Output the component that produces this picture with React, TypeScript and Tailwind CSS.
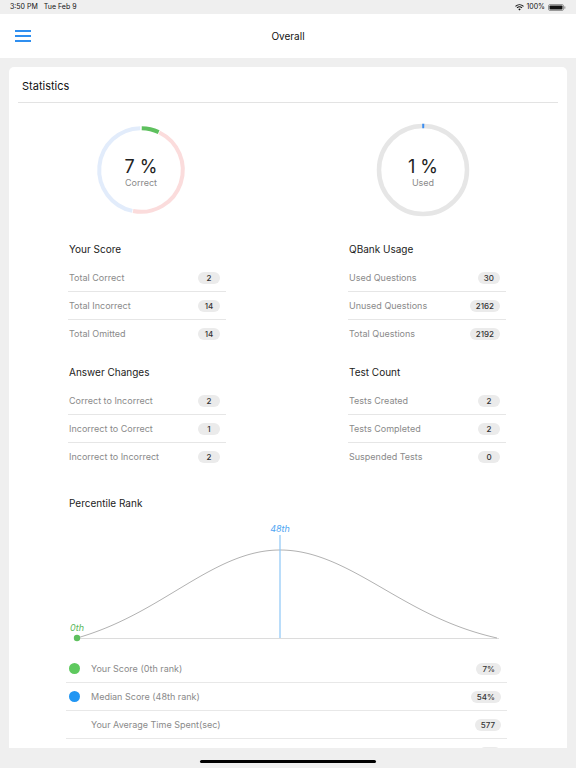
import React from "react";

const font = { fontFamily: "Inter, 'Liberation Sans', sans-serif" };

function arc(cx: number, cy: number, r: number, a0: number, a1: number) {
  const p = (a: number) => {
    const t = ((a - 90) * Math.PI) / 180;
    return `${(cx + r * Math.cos(t)).toFixed(2)} ${(cy + r * Math.sin(t)).toFixed(2)}`;
  };
  const large = a1 - a0 > 180 ? 1 : 0;
  return `M ${p(a0)} A ${r} ${r} 0 ${large} 1 ${p(a1)}`;
}

// bell curve in card coordinates (page x - 9, page y - 512)
function bellPath() {
  const x0 = 68, peak = 271, x1 = 488, base = 125, h = 88, s = 104;
  const pts: string[] = [];
  for (let x = x0; x <= x1; x += 3) {
    const d = x - peak;
    const edge = d < 0 ? peak - x0 : x1 - peak;
    const gEnd = Math.exp(-(edge * edge) / (2 * s * s));
    const g = Math.exp(-(d * d) / (2 * s * s));
    const y = base - (h * Math.max(0, g - gEnd)) / (1 - gEnd);
    pts.push(`${x.toFixed(1)},${y.toFixed(2)}`);
  }
  return "M" + pts.join(" L");
}

const Badge = ({ v }: { v: string }) => (
  <span className="inline-flex h-[12px] min-w-[22px] items-center justify-center rounded-full bg-[#ebebeb] px-[6px] text-[8px] font-medium text-[#333]">
    {v}
  </span>
);

function StatList({ title, rows }: { title: string; rows: [string, string][] }) {
  return (
    <div className="w-[158px]">
      <div className="h-[16px] text-[10px] leading-[16px] text-[#222] pl-[1px]">{title}</div>
      <div className="mt-[7px]">
        {rows.map(([k, v], i) => (
          <div
            key={k}
            className={`flex h-[28px] items-center justify-between pl-[1px] pr-[6px] ${i < rows.length - 1 ? "border-b border-[#e6e6e6]" : ""}`}
          >
            <span className="text-[9px] text-[#8a8a8a]">{k}</span>
            <Badge v={v} />
          </div>
        ))}
      </div>
    </div>
  );
}

export default function App() {
  return (
    <div className="flex h-[768px] w-[576px] flex-col overflow-hidden bg-[#efefef]" style={font}>
      {/* status bar */}
      <div className="flex h-[14px] items-center justify-between px-[10px] text-[7px] text-[#111]">
        <div className="flex gap-[6px]">
          <span>3:50 PM</span>
          <span>Tue Feb 9</span>
        </div>
        <div className="flex items-center gap-[2px]">
          <svg width="9" height="7" viewBox="0 0 9 7">
            <path d="M0.5 2.3 A6 6 0 0 1 8.5 2.3" stroke="#111" strokeWidth="1.1" fill="none" />
            <path d="M2 3.8 A3.8 3.8 0 0 1 7 3.8" stroke="#111" strokeWidth="1.1" fill="none" />
            <path d="M4.5 6.6 L3.3 5.2 A1.7 1.7 0 0 1 5.7 5.2 Z" fill="#111" />
          </svg>
          <span>100%</span>
          <svg width="18" height="7" viewBox="0 0 18 7" className="ml-[1px]">
            <rect x="0.5" y="0.5" width="15" height="6" rx="1.5" stroke="#999" fill="none" />
            <rect x="1.5" y="1.5" width="13" height="4" rx="0.8" fill="#111" />
            <rect x="16.2" y="2.3" width="1.2" height="2.4" rx="0.5" fill="#999" />
          </svg>
        </div>
      </div>

      {/* nav bar */}
      <div className="relative flex h-[44px] shrink-0 items-center justify-center bg-white">
        <svg className="absolute left-[15px] top-[15px]" width="16" height="14" viewBox="0 0 16 14">
          <path d="M0 2 H16 M0 7 H16 M0 12 H16" stroke="#2f8ff0" strokeWidth="2" />
        </svg>
        <span className="text-[10px] text-[#111]">Overall</span>
      </div>

      {/* scroll area */}
      <div className="h-[690px] shrink-0 overflow-hidden px-[9px] pt-[9px]">
        <div className="h-[720px] rounded-[5px] bg-white">
          <div className="mx-[9px] flex h-[36px] items-center border-b border-[#e3e3e3] pl-[4px] pt-[3px] text-[11px] text-[#111]">
            Statistics
          </div>

          {/* donuts */}
          <div className="relative mt-[17px] h-[100px]">
            <svg className="absolute left-[82px] top-0" width="100" height="100" viewBox="0 0 100 100">
              <path d={arc(50, 50, 41.8, 1, 25)} stroke="#5ec05e" strokeWidth="4" fill="none" />
              <path d={arc(50, 50, 41.8, 26, 191)} stroke="#fbdcdc" strokeWidth="4" fill="none" />
              <path d={arc(50, 50, 41.8, 192, 359)} stroke="#e2ecfb" strokeWidth="4" fill="none" />
            </svg>
            <div className="absolute left-[82px] top-[2px] flex h-[100px] w-[100px] flex-col items-center justify-center">
              <span className="text-[18px] leading-[20px] text-[#222]">7 %</span>
              <span className="text-[9px] leading-[11px] text-[#8a8a8a]">Correct</span>
            </div>
            <svg className="absolute left-[364px] top-0" width="100" height="100" viewBox="0 0 100 100">
              <circle cx="50" cy="50" r="44" stroke="#e6e6e6" strokeWidth="4.5" fill="none" />
              <path d={arc(50, 50, 44, -1, 1.6)} stroke="#3d8ef0" strokeWidth="4.5" fill="none" />
            </svg>
            <div className="absolute left-[364px] top-[2px] flex h-[100px] w-[100px] flex-col items-center justify-center">
              <span className="text-[18px] leading-[20px] text-[#222]">1 %</span>
              <span className="text-[9px] leading-[11px] text-[#8a8a8a]">Used</span>
            </div>
          </div>

          {/* lists */}
          <div className="mt-[21px] flex pl-[59px]">
            <StatList
              title="Your Score"
              rows={[
                ["Total Correct", "2"],
                ["Total Incorrect", "14"],
                ["Total Omitted", "14"],
              ]}
            />
            <div className="ml-[122px]">
              <StatList
                title="QBank Usage"
                rows={[
                  ["Used Questions", "30"],
                  ["Unused Questions", "2162"],
                  ["Total Questions", "2192"],
                ]}
              />
            </div>
          </div>
          <div className="mt-[16px] flex pl-[59px]">
            <StatList
              title="Answer Changes"
              rows={[
                ["Correct to Incorrect", "2"],
                ["Incorrect to Correct", "1"],
                ["Incorrect to Incorrect", "2"],
              ]}
            />
            <div className="ml-[122px]">
              <StatList
                title="Test Count"
                rows={[
                  ["Tests Created", "2"],
                  ["Tests Completed", "2"],
                  ["Suspended Tests", "0"],
                ]}
              />
            </div>
          </div>

          {/* percentile */}
          <div className="mt-[24px] h-[16px] pl-[60px] text-[10px] leading-[16px] text-[#222]">Percentile Rank</div>
          <svg width="558" height="136" viewBox="0 0 558 136" className="mt-[2px] block">
            <line x1="67" y1="125.5" x2="490" y2="125.5" stroke="#dcdcdc" strokeWidth="1" />
            <path d={bellPath()} stroke="#a8a8a8" strokeWidth="0.9" fill="none" />
            <line x1="271" y1="22" x2="271" y2="125" stroke="#8cc6f7" strokeWidth="1.2" />
            <text x="271" y="19" textAnchor="middle" fontSize="9" fontStyle="italic" fill="#4ea5f2">48th</text>
            <text x="61" y="118" fontSize="9" fontStyle="italic" fill="#5cb85c">0th</text>
            <circle cx="68" cy="125" r="3.2" fill="#5ec05e" />
          </svg>

          <div className="ml-[57px] mt-[6px] w-[441px]">
            {[
              ["#5ec95e", "Your Score (0th rank)", "7%"],
              ["#2196f3", "Median Score (48th rank)", "54%"],
              ["", "Your Average Time Spent(sec)", "577"],
              ["", "", ""],
            ].map(([c, k, v], i) => (
              <div key={i} className="flex h-[28px] items-center border-b border-[#e8e8e8] pl-[3px] pr-[6px]">
                <span className="h-[11px] w-[11px] rounded-full" style={{ backgroundColor: c || "transparent" }} />
                <span className="ml-[11px] flex-1 text-[9px] text-[#8a8a8a]">{k}</span>
                <Badge v={v} />
              </div>
            ))}
          </div>
        </div>
      </div>

      {/* home indicator */}
      <div className="flex flex-1 items-center justify-center">
        <div className="mt-[7px] h-[3px] w-[176px] rounded-full bg-black" />
      </div>
    </div>
  );
}
